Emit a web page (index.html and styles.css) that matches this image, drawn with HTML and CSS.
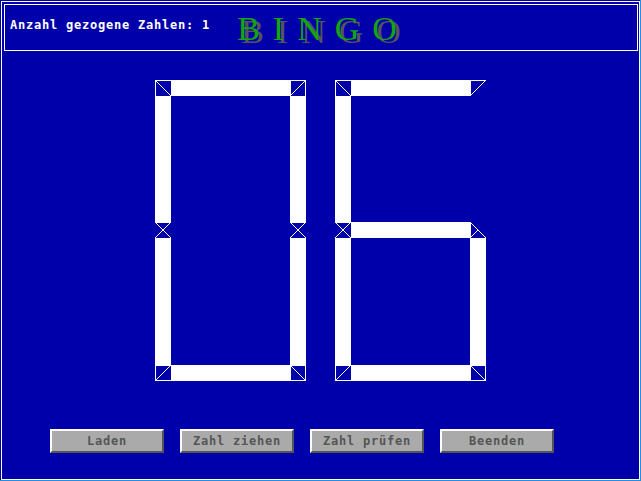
FILE: index.html
```html
<!DOCTYPE html>
<html lang="de">
<head>
<meta charset="utf-8">
<title>BINGO</title>
<link rel="stylesheet" href="styles.css">
</head>
<body>
<div class="screen">
  <div class="frame">
    <header class="header">
      <span class="count">Anzahl gezogene Zahlen: 1</span>
      <h1 class="title">BINGO</h1>
    </header>
    <div class="display" aria-label="06">
      <svg class="digit" width="151" height="301" viewBox="0 0 151 301" aria-hidden="true">
        <g class="fill">
          <rect x="15.5" y="0.5" width="120" height="15"/>
          <rect x="135.5" y="15.5" width="15" height="127"/>
          <rect x="135.5" y="157.5" width="15" height="128"/>
          <rect x="15.5" y="285.5" width="120" height="15"/>
          <rect x="0.5" y="157.5" width="15" height="128"/>
          <rect x="0.5" y="15.5" width="15" height="127"/>
        </g>
        <g class="line">
          <path d="M0.5 0.5 H150.5 L135.5 15.5 H15.5 Z"/>
          <path d="M150.5 0.5 V142.5 L143 150 L135.5 142.5 V15.5 Z"/>
          <path d="M143 150 L150.5 157.5 V300.5 L135.5 285.5 V157.5 Z"/>
          <path d="M0.5 300.5 L15.5 285.5 H135.5 L150.5 300.5 Z"/>
          <path d="M0.5 300.5 V157.5 L8 150 L15.5 157.5 V285.5 Z"/>
          <path d="M0.5 0.5 L15.5 15.5 V142.5 L8 150 L0.5 142.5 Z"/>
        </g>
      </svg>
      <svg class="digit" width="151" height="301" viewBox="0 0 151 301" aria-hidden="true">
        <g class="fill">
          <rect x="15.5" y="0.5" width="120" height="15"/>
          <rect x="135.5" y="157.5" width="15" height="128"/>
          <rect x="15.5" y="285.5" width="120" height="15"/>
          <rect x="0.5" y="157.5" width="15" height="128"/>
          <rect x="0.5" y="15.5" width="15" height="127"/>
          <rect x="15.5" y="142.5" width="120" height="15"/>
        </g>
        <g class="line">
          <path d="M0.5 0.5 H150.5 L135.5 15.5 H15.5 Z"/>
          <path d="M143 150 L150.5 157.5 V300.5 L135.5 285.5 V157.5 Z"/>
          <path d="M0.5 300.5 L15.5 285.5 H135.5 L150.5 300.5 Z"/>
          <path d="M0.5 300.5 V157.5 L8 150 L15.5 157.5 V285.5 Z"/>
          <path d="M0.5 0.5 L15.5 15.5 V142.5 L8 150 L0.5 142.5 Z"/>
          <path d="M8 150 L15.5 142.5 H135.5 L143 150 L135.5 157.5 H15.5 Z"/>
        </g>
      </svg>
    </div>
    <div class="buttons">
      <button class="btn" type="button">Laden</button>
      <button class="btn" type="button">Zahl ziehen</button>
      <button class="btn" type="button">Zahl prüfen</button>
      <button class="btn" type="button">Beenden</button>
    </div>
  </div>
</div>
</body>
</html>
```
FILE: styles.css
```css
* { box-sizing: border-box; }
html, body { margin: 0; padding: 0; background: #0000aa; }
.screen {
  width: 641px;
  height: 481px;
  background: #0000aa;
  border-right: 1px solid #1e90e0;
  border-bottom: 1px solid #1e90e0;
  padding: 1px 0 0 1px;
}
.frame {
  width: 639px;
  height: 479px;
  border: 1px solid #ffffff;
}
.header {
  margin: 2px 0 0 2px;
  width: 634px;
  height: 47px;
  border: 1px solid #ffffff;
  display: flex;
  align-items: center;
  padding-left: 5px;
}
.count {
  font-family: "DejaVu Sans Mono", "Liberation Mono", monospace;
  font-weight: bold;
  font-size: 12px;
  letter-spacing: 0.78px;
  color: #ffffff;
  margin-top: -6px;
}
.title {
  margin: 2px 0 0 27px;
  font-family: "Liberation Serif", serif;
  font-weight: normal;
  font-size: 34px;
  line-height: 34px;
  letter-spacing: 13px;
  color: #11a611;
  text-shadow: 4px 3px 0 #555555;
}
.display {
  margin-top: 29px;
  display: flex;
  justify-content: center;
  gap: 29px;
}
.digit { display: block; shape-rendering: crispEdges; }
.digit .fill rect { fill: #ffffff; }
.digit .line path { fill: none; stroke: #ffffff; stroke-width: 1; }
.buttons {
  margin-top: 48px;
  padding-left: 48px;
  display: flex;
  gap: 16px;
}
.btn {
  width: 114px;
  height: 24px;
  margin: 0;
  padding: 0;
  background: #aaaaaa;
  border: 2px solid;
  border-color: #ffffff #555555 #555555 #ffffff;
  font-family: "DejaVu Sans Mono", "Liberation Mono", monospace;
  font-weight: bold;
  font-size: 12px;
  letter-spacing: 0.78px;
  color: #555555;
  text-align: center;
}
```
